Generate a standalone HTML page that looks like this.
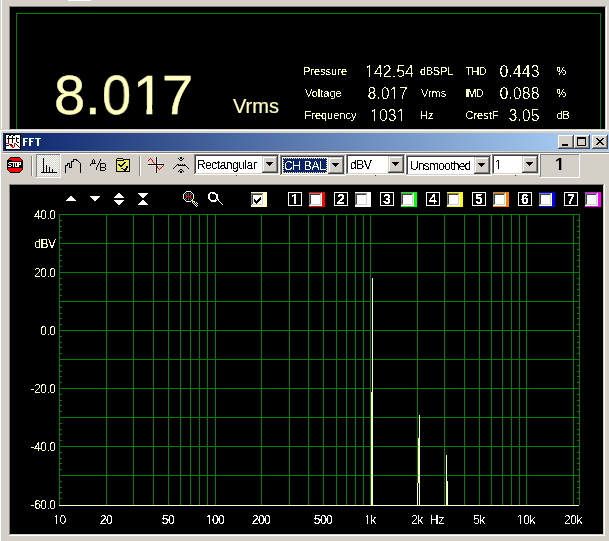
<!DOCTYPE html>
<html><head><meta charset="utf-8"><style>
html,body{margin:0;padding:0;width:609px;height:541px;overflow:hidden;background:#d4d0c8;}
svg{position:absolute;left:0;top:0;}
.t{position:absolute;white-space:nowrap;font-family:"Liberation Sans", sans-serif;line-height:1;will-change:transform;}
.px{filter:url(#crisp);will-change:auto;}
.px2{filter:url(#crisp2);will-change:auto;}
.px0{filter:url(#crisp0);will-change:auto;}
.one{display:inline-block;clip-path:polygon(0 0,100% 0,100% 0.68em,0.345em 0.68em,0.345em 100%,0.24em 100%,0.24em 0.68em,0 0.68em);}
.oneb{display:inline-block;clip-path:polygon(0 0,100% 0,100% 0.68em,0.375em 0.68em,0.375em 100%,0.225em 100%,0.225em 0.68em,0 0.68em);}
</style></head><body>
<svg width="609" height="541" viewBox="0 0 609 541" shape-rendering="crispEdges">
<defs><filter id="crisp" x="0" y="0" width="100%" height="100%"><feComponentTransfer><feFuncA type="discrete" tableValues="0 1"/></feComponentTransfer></filter><filter id="crisp0" x="0" y="0" width="100%" height="100%"><feComponentTransfer><feFuncA type="discrete" tableValues="0 1 1"/></feComponentTransfer></filter><filter id="crisp2" x="0" y="0" width="100%" height="100%"><feComponentTransfer><feFuncA type="discrete" tableValues="0 0 1"/></feComponentTransfer></filter></defs>
<rect x="0" y="0" width="609" height="541" fill="#d4d0c8"/>
<rect x="1" y="0" width="1" height="129" fill="#fff"/>
<rect x="68" y="0" width="23" height="1" fill="#fff"/>
<rect x="9" y="6" width="598" height="125" fill="#fff"/>
<rect x="9" y="6" width="597" height="124" fill="#808080"/>
<rect x="10" y="7" width="596" height="123" fill="#d4d0c8"/>
<rect x="10" y="7" width="595" height="122" fill="#000"/>
<rect x="11" y="8" width="594" height="121" fill="#000"/>
<rect x="16" y="13" width="585" height="1" fill="#008000"/>
<rect x="16" y="13" width="1" height="116" fill="#008000"/>
<rect x="600" y="13" width="1" height="116" fill="#008000"/>
<rect x="0" y="130" width="609" height="1" fill="#fff"/>
<rect x="0" y="130" width="1" height="411" fill="#fff"/>
<defs><linearGradient id="tg" gradientUnits="userSpaceOnUse" x1="3" x2="570" y1="0" y2="0"><stop offset="0" stop-color="#0a246a"/><stop offset="1" stop-color="#a6caf0"/></linearGradient></defs>
<rect x="3" y="133" width="606" height="18" fill="url(#tg)"/>
<rect x="5" y="134" width="16" height="16" fill="#000"/>
<rect x="6" y="135" width="14" height="14" fill="#fff"/>
<rect x="9" y="135" width="2" height="1" fill="#000"/>
<rect x="13" y="135" width="2" height="1" fill="#000"/>
<rect x="8" y="136" width="1" height="1" fill="#000"/>
<rect x="12" y="136" width="1" height="1" fill="#000"/>
<rect x="8" y="137" width="1" height="1" fill="#000"/>
<rect x="12" y="137" width="1" height="1" fill="#000"/>
<rect x="16" y="137" width="1" height="1" fill="#000"/>
<rect x="7" y="138" width="8" height="1" fill="#000"/>
<rect x="16" y="138" width="3" height="1" fill="#000"/>
<rect x="8" y="139" width="1" height="1" fill="#000"/>
<rect x="12" y="139" width="1" height="1" fill="#000"/>
<rect x="16" y="139" width="1" height="1" fill="#000"/>
<rect x="8" y="140" width="1" height="1" fill="#000"/>
<rect x="12" y="140" width="1" height="1" fill="#000"/>
<rect x="16" y="140" width="1" height="1" fill="#000"/>
<rect x="8" y="141" width="1" height="1" fill="#000"/>
<rect x="12" y="141" width="1" height="1" fill="#000"/>
<rect x="16" y="141" width="1" height="1" fill="#000"/>
<rect x="8" y="142" width="1" height="1" fill="#000"/>
<rect x="12" y="142" width="1" height="1" fill="#000"/>
<rect x="17" y="142" width="2" height="1" fill="#000"/>
<rect x="6" y="143" width="3" height="1" fill="#f00"/>
<rect x="14" y="143" width="2" height="1" fill="#f00"/>
<rect x="9" y="144" width="1" height="1" fill="#f00"/>
<rect x="10" y="144" width="2" height="1" fill="#000"/>
<rect x="14" y="144" width="1" height="1" fill="#f00"/>
<rect x="16" y="144" width="1" height="1" fill="#000"/>
<rect x="6" y="145" width="3" height="1" fill="#000"/>
<rect x="10" y="145" width="2" height="1" fill="#f00"/>
<rect x="12" y="145" width="1" height="1" fill="#000"/>
<rect x="14" y="145" width="1" height="1" fill="#f00"/>
<rect x="17" y="145" width="1" height="1" fill="#000"/>
<rect x="11" y="146" width="2" height="1" fill="#f00"/>
<rect x="14" y="146" width="1" height="1" fill="#f00"/>
<rect x="18" y="146" width="1" height="1" fill="#000"/>
<rect x="12" y="147" width="2" height="1" fill="#f00"/>
<rect x="19" y="147" width="1" height="1" fill="#f00"/>
<rect x="23" y="138" width="5" height="1" fill="#fff"/>
<rect x="29" y="138" width="5" height="1" fill="#fff"/>
<rect x="35" y="138" width="6" height="1" fill="#fff"/>
<rect x="23" y="139" width="2" height="1" fill="#fff"/>
<rect x="29" y="139" width="2" height="1" fill="#fff"/>
<rect x="37" y="139" width="2" height="1" fill="#fff"/>
<rect x="23" y="140" width="2" height="1" fill="#fff"/>
<rect x="29" y="140" width="2" height="1" fill="#fff"/>
<rect x="37" y="140" width="2" height="1" fill="#fff"/>
<rect x="23" y="141" width="4" height="1" fill="#fff"/>
<rect x="29" y="141" width="4" height="1" fill="#fff"/>
<rect x="37" y="141" width="2" height="1" fill="#fff"/>
<rect x="23" y="142" width="2" height="1" fill="#fff"/>
<rect x="29" y="142" width="2" height="1" fill="#fff"/>
<rect x="37" y="142" width="2" height="1" fill="#fff"/>
<rect x="23" y="143" width="2" height="1" fill="#fff"/>
<rect x="29" y="143" width="2" height="1" fill="#fff"/>
<rect x="37" y="143" width="2" height="1" fill="#fff"/>
<rect x="23" y="144" width="2" height="1" fill="#fff"/>
<rect x="29" y="144" width="2" height="1" fill="#fff"/>
<rect x="37" y="144" width="2" height="1" fill="#fff"/>
<rect x="23" y="145" width="2" height="1" fill="#fff"/>
<rect x="29" y="145" width="2" height="1" fill="#fff"/>
<rect x="37" y="145" width="2" height="1" fill="#fff"/>
<rect x="558" y="135" width="16" height="14" fill="#404040"/>
<rect x="558" y="135" width="15" height="13" fill="#fff"/>
<rect x="559" y="136" width="14" height="12" fill="#808080"/>
<rect x="559" y="136" width="13" height="11" fill="#d4d0c8"/>
<rect x="560" y="137" width="12" height="10" fill="#d4d0c8"/>
<rect x="574" y="135" width="16" height="14" fill="#404040"/>
<rect x="574" y="135" width="15" height="13" fill="#fff"/>
<rect x="575" y="136" width="14" height="12" fill="#808080"/>
<rect x="575" y="136" width="13" height="11" fill="#d4d0c8"/>
<rect x="576" y="137" width="12" height="10" fill="#d4d0c8"/>
<rect x="592" y="135" width="16" height="14" fill="#404040"/>
<rect x="592" y="135" width="15" height="13" fill="#fff"/>
<rect x="593" y="136" width="14" height="12" fill="#808080"/>
<rect x="593" y="136" width="13" height="11" fill="#d4d0c8"/>
<rect x="594" y="137" width="12" height="10" fill="#d4d0c8"/>
<rect x="562" y="144" width="6" height="2" fill="#000"/>
<rect x="577" y="137" width="9" height="2" fill="#000"/>
<rect x="577" y="137" width="1" height="9" fill="#000"/>
<rect x="585" y="137" width="1" height="9" fill="#000"/>
<rect x="577" y="145" width="9" height="1" fill="#000"/>
<rect x="596" y="138" width="2" height="1" fill="#000"/>
<rect x="602" y="138" width="2" height="1" fill="#000"/>
<rect x="597" y="139" width="2" height="1" fill="#000"/>
<rect x="601" y="139" width="2" height="1" fill="#000"/>
<rect x="598" y="140" width="4" height="1" fill="#000"/>
<rect x="599" y="141" width="2" height="1" fill="#000"/>
<rect x="598" y="142" width="4" height="1" fill="#000"/>
<rect x="597" y="143" width="2" height="1" fill="#000"/>
<rect x="601" y="143" width="2" height="1" fill="#000"/>
<rect x="596" y="144" width="2" height="1" fill="#000"/>
<rect x="602" y="144" width="2" height="1" fill="#000"/>
<rect x="3" y="152" width="606" height="1" fill="#808080"/>
<rect x="3" y="153" width="606" height="1" fill="#fff"/>
<rect x="10" y="157" width="10" height="1" fill="#000"/>
<rect x="9" y="158" width="1" height="1" fill="#000"/>
<rect x="10" y="158" width="10" height="1" fill="#f00"/>
<rect x="20" y="158" width="1" height="1" fill="#000"/>
<rect x="8" y="159" width="1" height="1" fill="#000"/>
<rect x="9" y="159" width="12" height="1" fill="#f00"/>
<rect x="21" y="159" width="1" height="1" fill="#000"/>
<rect x="7" y="160" width="5" height="1" fill="#000"/>
<rect x="12" y="160" width="10" height="1" fill="#f00"/>
<rect x="22" y="160" width="1" height="1" fill="#000"/>
<rect x="7" y="161" width="16" height="1" fill="#000"/>
<rect x="7" y="162" width="2" height="1" fill="#000"/>
<rect x="9" y="162" width="12" height="1" fill="#fff"/>
<rect x="21" y="162" width="2" height="1" fill="#000"/>
<rect x="7" y="163" width="1" height="1" fill="#000"/>
<rect x="8" y="163" width="1" height="1" fill="#fff"/>
<rect x="9" y="163" width="4" height="1" fill="#000"/>
<rect x="13" y="163" width="1" height="1" fill="#fff"/>
<rect x="14" y="163" width="1" height="1" fill="#000"/>
<rect x="15" y="163" width="1" height="1" fill="#fff"/>
<rect x="16" y="163" width="1" height="1" fill="#000"/>
<rect x="17" y="163" width="2" height="1" fill="#fff"/>
<rect x="19" y="163" width="1" height="1" fill="#000"/>
<rect x="20" y="163" width="1" height="1" fill="#fff"/>
<rect x="21" y="163" width="2" height="1" fill="#000"/>
<rect x="7" y="164" width="2" height="1" fill="#000"/>
<rect x="9" y="164" width="2" height="1" fill="#fff"/>
<rect x="11" y="164" width="2" height="1" fill="#000"/>
<rect x="13" y="164" width="1" height="1" fill="#fff"/>
<rect x="14" y="164" width="1" height="1" fill="#000"/>
<rect x="15" y="164" width="1" height="1" fill="#fff"/>
<rect x="16" y="164" width="1" height="1" fill="#000"/>
<rect x="17" y="164" width="4" height="1" fill="#fff"/>
<rect x="21" y="164" width="2" height="1" fill="#000"/>
<rect x="7" y="165" width="4" height="1" fill="#000"/>
<rect x="11" y="165" width="1" height="1" fill="#fff"/>
<rect x="12" y="165" width="1" height="1" fill="#000"/>
<rect x="13" y="165" width="1" height="1" fill="#fff"/>
<rect x="14" y="165" width="1" height="1" fill="#000"/>
<rect x="15" y="165" width="1" height="1" fill="#fff"/>
<rect x="16" y="165" width="1" height="1" fill="#000"/>
<rect x="17" y="165" width="2" height="1" fill="#fff"/>
<rect x="19" y="165" width="4" height="1" fill="#000"/>
<rect x="7" y="166" width="1" height="1" fill="#000"/>
<rect x="8" y="166" width="3" height="1" fill="#fff"/>
<rect x="11" y="166" width="2" height="1" fill="#000"/>
<rect x="13" y="166" width="1" height="1" fill="#fff"/>
<rect x="14" y="166" width="1" height="1" fill="#000"/>
<rect x="15" y="166" width="4" height="1" fill="#fff"/>
<rect x="19" y="166" width="4" height="1" fill="#000"/>
<rect x="7" y="167" width="16" height="1" fill="#000"/>
<rect x="7" y="168" width="1" height="1" fill="#000"/>
<rect x="8" y="168" width="14" height="1" fill="#f00"/>
<rect x="22" y="168" width="1" height="1" fill="#000"/>
<rect x="7" y="169" width="1" height="1" fill="#000"/>
<rect x="8" y="169" width="14" height="1" fill="#f00"/>
<rect x="22" y="169" width="1" height="1" fill="#000"/>
<rect x="8" y="170" width="1" height="1" fill="#000"/>
<rect x="9" y="170" width="12" height="1" fill="#f00"/>
<rect x="21" y="170" width="1" height="1" fill="#000"/>
<rect x="9" y="171" width="1" height="1" fill="#000"/>
<rect x="10" y="171" width="10" height="1" fill="#f00"/>
<rect x="20" y="171" width="1" height="1" fill="#000"/>
<rect x="10" y="172" width="10" height="1" fill="#000"/>
<rect x="31" y="156" width="1" height="20" fill="#808080"/>
<rect x="32" y="156" width="1" height="20" fill="#fff"/>
<rect x="36" y="154" width="25" height="24" fill="#fff"/>
<rect x="36" y="154" width="24" height="23" fill="#808080"/>
<defs><pattern id="dith" x="0" y="0" width="2" height="2" patternUnits="userSpaceOnUse"><rect x="0" y="0" width="2" height="2" fill="#d4d0c8"/><rect x="0" y="0" width="1" height="1" fill="#fff"/><rect x="1" y="1" width="1" height="1" fill="#fff"/></pattern></defs>
<rect x="37" y="155" width="23" height="22" fill="#d4d0c8"/>
<rect x="37" y="155" width="22" height="21" fill="url(#dith)"/>
<rect x="43" y="158" width="1" height="14" fill="#000"/>
<rect x="46" y="165" width="1" height="7" fill="#000"/>
<rect x="49" y="167" width="1" height="5" fill="#000"/>
<rect x="52" y="169" width="1" height="3" fill="#000"/>
<rect x="41" y="172" width="16" height="1" fill="#000"/>
<path d="M65.5,173 V165.5 H67.5 V163.5 H69.5 V167.5 H71.5 V161.5 H73.5 V159.5 H75.5 L77.5,160.5 L79.5,162.5 L80.5,163.5 V173" fill="none" stroke="#000" stroke-width="1"/>
<rect x="93" y="159" width="1" height="1" fill="#000"/>
<rect x="100" y="159" width="1" height="1" fill="#000"/>
<rect x="92" y="160" width="1" height="1" fill="#000"/>
<rect x="94" y="160" width="1" height="1" fill="#000"/>
<rect x="100" y="160" width="1" height="1" fill="#000"/>
<rect x="92" y="161" width="1" height="1" fill="#000"/>
<rect x="94" y="161" width="1" height="1" fill="#000"/>
<rect x="99" y="161" width="1" height="1" fill="#000"/>
<rect x="92" y="162" width="1" height="1" fill="#000"/>
<rect x="94" y="162" width="1" height="1" fill="#000"/>
<rect x="99" y="162" width="1" height="1" fill="#000"/>
<rect x="91" y="163" width="5" height="1" fill="#000"/>
<rect x="98" y="163" width="1" height="1" fill="#000"/>
<rect x="100" y="163" width="5" height="1" fill="#000"/>
<rect x="90" y="164" width="1" height="1" fill="#000"/>
<rect x="98" y="164" width="1" height="1" fill="#000"/>
<rect x="100" y="164" width="1" height="1" fill="#000"/>
<rect x="105" y="164" width="1" height="1" fill="#000"/>
<rect x="90" y="165" width="1" height="1" fill="#000"/>
<rect x="97" y="165" width="1" height="1" fill="#000"/>
<rect x="100" y="165" width="1" height="1" fill="#000"/>
<rect x="105" y="165" width="1" height="1" fill="#000"/>
<rect x="97" y="166" width="1" height="1" fill="#000"/>
<rect x="100" y="166" width="1" height="1" fill="#000"/>
<rect x="105" y="166" width="1" height="1" fill="#000"/>
<rect x="96" y="167" width="1" height="1" fill="#000"/>
<rect x="100" y="167" width="5" height="1" fill="#000"/>
<rect x="96" y="168" width="1" height="1" fill="#000"/>
<rect x="100" y="168" width="1" height="1" fill="#000"/>
<rect x="105" y="168" width="1" height="1" fill="#000"/>
<rect x="96" y="169" width="1" height="1" fill="#000"/>
<rect x="100" y="169" width="1" height="1" fill="#000"/>
<rect x="105" y="169" width="1" height="1" fill="#000"/>
<rect x="100" y="170" width="5" height="1" fill="#000"/>
<rect x="117" y="158" width="6" height="1" fill="#000"/>
<rect x="116" y="159" width="1" height="1" fill="#000"/>
<rect x="117" y="159" width="1" height="1" fill="#ffff00"/>
<rect x="118" y="159" width="1" height="1" fill="#d4d0c8"/>
<rect x="119" y="159" width="1" height="1" fill="#ffff00"/>
<rect x="120" y="159" width="1" height="1" fill="#d4d0c8"/>
<rect x="121" y="159" width="1" height="1" fill="#ffff00"/>
<rect x="122" y="159" width="1" height="1" fill="#d4d0c8"/>
<rect x="123" y="159" width="7" height="1" fill="#000"/>
<rect x="116" y="160" width="8" height="1" fill="#000"/>
<rect x="124" y="160" width="1" height="1" fill="#ffff00"/>
<rect x="125" y="160" width="1" height="1" fill="#d4d0c8"/>
<rect x="126" y="160" width="1" height="1" fill="#ffff00"/>
<rect x="127" y="160" width="1" height="1" fill="#d4d0c8"/>
<rect x="128" y="160" width="1" height="1" fill="#ffff00"/>
<rect x="129" y="160" width="1" height="1" fill="#000"/>
<rect x="116" y="161" width="1" height="1" fill="#000"/>
<rect x="117" y="161" width="1" height="1" fill="#ffff00"/>
<rect x="118" y="161" width="1" height="1" fill="#d4d0c8"/>
<rect x="119" y="161" width="1" height="1" fill="#ffff00"/>
<rect x="120" y="161" width="1" height="1" fill="#d4d0c8"/>
<rect x="121" y="161" width="1" height="1" fill="#ffff00"/>
<rect x="122" y="161" width="1" height="1" fill="#d4d0c8"/>
<rect x="123" y="161" width="1" height="1" fill="#ffff00"/>
<rect x="124" y="161" width="1" height="1" fill="#d4d0c8"/>
<rect x="125" y="161" width="1" height="1" fill="#ffff00"/>
<rect x="126" y="161" width="1" height="1" fill="#d4d0c8"/>
<rect x="127" y="161" width="1" height="1" fill="#ffff00"/>
<rect x="128" y="161" width="1" height="1" fill="#d4d0c8"/>
<rect x="129" y="161" width="1" height="1" fill="#000"/>
<rect x="116" y="162" width="1" height="1" fill="#000"/>
<rect x="117" y="162" width="1" height="1" fill="#d4d0c8"/>
<rect x="118" y="162" width="1" height="1" fill="#ffff00"/>
<rect x="119" y="162" width="1" height="1" fill="#d4d0c8"/>
<rect x="120" y="162" width="1" height="1" fill="#ffff00"/>
<rect x="121" y="162" width="1" height="1" fill="#d4d0c8"/>
<rect x="122" y="162" width="1" height="1" fill="#ffff00"/>
<rect x="123" y="162" width="1" height="1" fill="#d4d0c8"/>
<rect x="124" y="162" width="2" height="1" fill="#000"/>
<rect x="126" y="162" width="1" height="1" fill="#ffff00"/>
<rect x="127" y="162" width="1" height="1" fill="#d4d0c8"/>
<rect x="128" y="162" width="1" height="1" fill="#ffff00"/>
<rect x="129" y="162" width="1" height="1" fill="#000"/>
<rect x="116" y="163" width="1" height="1" fill="#000"/>
<rect x="117" y="163" width="1" height="1" fill="#ffff00"/>
<rect x="118" y="163" width="1" height="1" fill="#d4d0c8"/>
<rect x="119" y="163" width="1" height="1" fill="#ffff00"/>
<rect x="120" y="163" width="1" height="1" fill="#d4d0c8"/>
<rect x="121" y="163" width="1" height="1" fill="#ffff00"/>
<rect x="122" y="163" width="1" height="1" fill="#d4d0c8"/>
<rect x="123" y="163" width="2" height="1" fill="#000"/>
<rect x="125" y="163" width="1" height="1" fill="#ffff00"/>
<rect x="126" y="163" width="1" height="1" fill="#d4d0c8"/>
<rect x="127" y="163" width="1" height="1" fill="#ffff00"/>
<rect x="128" y="163" width="1" height="1" fill="#d4d0c8"/>
<rect x="129" y="163" width="1" height="1" fill="#000"/>
<rect x="116" y="164" width="1" height="1" fill="#000"/>
<rect x="117" y="164" width="1" height="1" fill="#d4d0c8"/>
<rect x="118" y="164" width="2" height="1" fill="#000"/>
<rect x="120" y="164" width="1" height="1" fill="#ffff00"/>
<rect x="121" y="164" width="1" height="1" fill="#d4d0c8"/>
<rect x="122" y="164" width="2" height="1" fill="#000"/>
<rect x="124" y="164" width="1" height="1" fill="#ffff00"/>
<rect x="125" y="164" width="1" height="1" fill="#d4d0c8"/>
<rect x="126" y="164" width="1" height="1" fill="#ffff00"/>
<rect x="127" y="164" width="1" height="1" fill="#d4d0c8"/>
<rect x="128" y="164" width="1" height="1" fill="#ffff00"/>
<rect x="129" y="164" width="1" height="1" fill="#000"/>
<rect x="116" y="165" width="1" height="1" fill="#000"/>
<rect x="117" y="165" width="1" height="1" fill="#ffff00"/>
<rect x="118" y="165" width="1" height="1" fill="#d4d0c8"/>
<rect x="119" y="165" width="4" height="1" fill="#000"/>
<rect x="123" y="165" width="1" height="1" fill="#ffff00"/>
<rect x="124" y="165" width="1" height="1" fill="#d4d0c8"/>
<rect x="125" y="165" width="1" height="1" fill="#ffff00"/>
<rect x="126" y="165" width="1" height="1" fill="#d4d0c8"/>
<rect x="127" y="165" width="1" height="1" fill="#ffff00"/>
<rect x="128" y="165" width="1" height="1" fill="#d4d0c8"/>
<rect x="129" y="165" width="1" height="1" fill="#000"/>
<rect x="116" y="166" width="1" height="1" fill="#000"/>
<rect x="117" y="166" width="1" height="1" fill="#d4d0c8"/>
<rect x="118" y="166" width="1" height="1" fill="#ffff00"/>
<rect x="119" y="166" width="1" height="1" fill="#d4d0c8"/>
<rect x="120" y="166" width="2" height="1" fill="#000"/>
<rect x="122" y="166" width="1" height="1" fill="#ffff00"/>
<rect x="123" y="166" width="1" height="1" fill="#d4d0c8"/>
<rect x="124" y="166" width="1" height="1" fill="#ffff00"/>
<rect x="125" y="166" width="1" height="1" fill="#d4d0c8"/>
<rect x="126" y="166" width="2" height="1" fill="#000"/>
<rect x="128" y="166" width="1" height="1" fill="#ffff00"/>
<rect x="129" y="166" width="1" height="1" fill="#000"/>
<rect x="116" y="167" width="1" height="1" fill="#000"/>
<rect x="117" y="167" width="1" height="1" fill="#ffff00"/>
<rect x="118" y="167" width="1" height="1" fill="#d4d0c8"/>
<rect x="119" y="167" width="1" height="1" fill="#ffff00"/>
<rect x="120" y="167" width="1" height="1" fill="#d4d0c8"/>
<rect x="121" y="167" width="1" height="1" fill="#ffff00"/>
<rect x="122" y="167" width="1" height="1" fill="#d4d0c8"/>
<rect x="123" y="167" width="1" height="1" fill="#ffff00"/>
<rect x="124" y="167" width="1" height="1" fill="#d4d0c8"/>
<rect x="125" y="167" width="1" height="1" fill="#ffff00"/>
<rect x="126" y="167" width="2" height="1" fill="#000"/>
<rect x="128" y="167" width="1" height="1" fill="#d4d0c8"/>
<rect x="129" y="167" width="1" height="1" fill="#000"/>
<rect x="116" y="168" width="1" height="1" fill="#000"/>
<rect x="117" y="168" width="1" height="1" fill="#d4d0c8"/>
<rect x="118" y="168" width="1" height="1" fill="#ffff00"/>
<rect x="119" y="168" width="1" height="1" fill="#d4d0c8"/>
<rect x="120" y="168" width="1" height="1" fill="#ffff00"/>
<rect x="121" y="168" width="2" height="1" fill="#000"/>
<rect x="123" y="168" width="1" height="1" fill="#d4d0c8"/>
<rect x="124" y="168" width="1" height="1" fill="#ffff00"/>
<rect x="125" y="168" width="2" height="1" fill="#000"/>
<rect x="127" y="168" width="1" height="1" fill="#d4d0c8"/>
<rect x="128" y="168" width="1" height="1" fill="#ffff00"/>
<rect x="129" y="168" width="1" height="1" fill="#000"/>
<rect x="116" y="169" width="1" height="1" fill="#000"/>
<rect x="117" y="169" width="1" height="1" fill="#ffff00"/>
<rect x="118" y="169" width="1" height="1" fill="#d4d0c8"/>
<rect x="119" y="169" width="1" height="1" fill="#ffff00"/>
<rect x="120" y="169" width="1" height="1" fill="#d4d0c8"/>
<rect x="121" y="169" width="1" height="1" fill="#ffff00"/>
<rect x="122" y="169" width="1" height="1" fill="#d4d0c8"/>
<rect x="123" y="169" width="4" height="1" fill="#000"/>
<rect x="127" y="169" width="1" height="1" fill="#ffff00"/>
<rect x="128" y="169" width="1" height="1" fill="#d4d0c8"/>
<rect x="129" y="169" width="1" height="1" fill="#000"/>
<rect x="116" y="170" width="1" height="1" fill="#000"/>
<rect x="117" y="170" width="1" height="1" fill="#d4d0c8"/>
<rect x="118" y="170" width="1" height="1" fill="#ffff00"/>
<rect x="119" y="170" width="1" height="1" fill="#d4d0c8"/>
<rect x="120" y="170" width="1" height="1" fill="#ffff00"/>
<rect x="121" y="170" width="1" height="1" fill="#d4d0c8"/>
<rect x="122" y="170" width="1" height="1" fill="#ffff00"/>
<rect x="123" y="170" width="1" height="1" fill="#d4d0c8"/>
<rect x="124" y="170" width="2" height="1" fill="#000"/>
<rect x="126" y="170" width="1" height="1" fill="#ffff00"/>
<rect x="127" y="170" width="1" height="1" fill="#d4d0c8"/>
<rect x="128" y="170" width="1" height="1" fill="#ffff00"/>
<rect x="129" y="170" width="1" height="1" fill="#000"/>
<rect x="116" y="171" width="14" height="1" fill="#000"/>
<rect x="139" y="156" width="1" height="20" fill="#808080"/>
<rect x="140" y="156" width="1" height="20" fill="#fff"/>
<rect x="148" y="163" width="1" height="1" fill="#fff"/>
<rect x="148" y="165" width="1" height="1" fill="#fff"/>
<rect x="150" y="163" width="1" height="1" fill="#fff"/>
<rect x="150" y="165" width="1" height="1" fill="#fff"/>
<rect x="152" y="163" width="1" height="1" fill="#fff"/>
<rect x="152" y="165" width="1" height="1" fill="#fff"/>
<rect x="154" y="163" width="1" height="1" fill="#fff"/>
<rect x="154" y="165" width="1" height="1" fill="#fff"/>
<rect x="156" y="163" width="1" height="1" fill="#fff"/>
<rect x="156" y="165" width="1" height="1" fill="#fff"/>
<rect x="158" y="163" width="1" height="1" fill="#fff"/>
<rect x="158" y="165" width="1" height="1" fill="#fff"/>
<rect x="160" y="163" width="1" height="1" fill="#fff"/>
<rect x="160" y="165" width="1" height="1" fill="#fff"/>
<rect x="162" y="163" width="1" height="1" fill="#fff"/>
<rect x="162" y="165" width="1" height="1" fill="#fff"/>
<rect x="155" y="157" width="1" height="1" fill="#fff"/>
<rect x="157" y="157" width="1" height="1" fill="#fff"/>
<rect x="155" y="159" width="1" height="1" fill="#fff"/>
<rect x="157" y="159" width="1" height="1" fill="#fff"/>
<rect x="155" y="161" width="1" height="1" fill="#fff"/>
<rect x="157" y="161" width="1" height="1" fill="#fff"/>
<rect x="155" y="163" width="1" height="1" fill="#fff"/>
<rect x="157" y="163" width="1" height="1" fill="#fff"/>
<rect x="155" y="165" width="1" height="1" fill="#fff"/>
<rect x="157" y="165" width="1" height="1" fill="#fff"/>
<rect x="155" y="167" width="1" height="1" fill="#fff"/>
<rect x="157" y="167" width="1" height="1" fill="#fff"/>
<rect x="155" y="169" width="1" height="1" fill="#fff"/>
<rect x="157" y="169" width="1" height="1" fill="#fff"/>
<rect x="155" y="171" width="1" height="1" fill="#fff"/>
<rect x="157" y="171" width="1" height="1" fill="#fff"/>
<rect x="148" y="160" width="1" height="1" fill="#f00"/>
<rect x="149" y="159" width="1" height="1" fill="#f00"/>
<rect x="150" y="158" width="1" height="1" fill="#f00"/>
<rect x="151" y="159" width="1" height="1" fill="#f00"/>
<rect x="152" y="160" width="1" height="1" fill="#f00"/>
<rect x="152" y="161" width="1" height="1" fill="#f00"/>
<rect x="153" y="162" width="1" height="1" fill="#f00"/>
<rect x="154" y="163" width="1" height="1" fill="#f00"/>
<rect x="155" y="164" width="1" height="1" fill="#f00"/>
<rect x="156" y="165" width="1" height="1" fill="#f00"/>
<rect x="157" y="166" width="1" height="1" fill="#f00"/>
<rect x="157" y="167" width="1" height="1" fill="#f00"/>
<rect x="158" y="168" width="1" height="1" fill="#f00"/>
<rect x="159" y="169" width="1" height="1" fill="#f00"/>
<rect x="160" y="168" width="1" height="1" fill="#f00"/>
<rect x="161" y="167" width="1" height="1" fill="#f00"/>
<rect x="162" y="166" width="1" height="1" fill="#f00"/>
<rect x="163" y="165" width="1" height="1" fill="#f00"/>
<rect x="156" y="157" width="1" height="16" fill="#000"/>
<rect x="148" y="164" width="16" height="1" fill="#000"/>
<rect x="180" y="157" width="2" height="1" fill="#000"/>
<rect x="178" y="158" width="1" height="1" fill="#000"/>
<rect x="180" y="158" width="2" height="1" fill="#000"/>
<rect x="183" y="158" width="1" height="1" fill="#000"/>
<rect x="179" y="159" width="1" height="1" fill="#000"/>
<rect x="182" y="159" width="1" height="1" fill="#000"/>
<rect x="180" y="160" width="2" height="1" fill="#000"/>
<rect x="177" y="164" width="2" height="1" fill="#000"/>
<rect x="180" y="164" width="1" height="1" fill="#000"/>
<rect x="182" y="164" width="1" height="1" fill="#000"/>
<rect x="184" y="164" width="1" height="1" fill="#000"/>
<rect x="176" y="165" width="1" height="1" fill="#000"/>
<rect x="178" y="165" width="8" height="1" fill="#000"/>
<rect x="175" y="166" width="1" height="1" fill="#000"/>
<rect x="186" y="166" width="1" height="1" fill="#000"/>
<rect x="174" y="167" width="1" height="1" fill="#000"/>
<rect x="187" y="167" width="1" height="1" fill="#000"/>
<rect x="173" y="168" width="1" height="1" fill="#000"/>
<rect x="188" y="168" width="1" height="1" fill="#000"/>
<rect x="180" y="169" width="2" height="1" fill="#000"/>
<rect x="179" y="170" width="1" height="1" fill="#000"/>
<rect x="182" y="170" width="1" height="1" fill="#000"/>
<rect x="178" y="171" width="1" height="1" fill="#000"/>
<rect x="180" y="171" width="2" height="1" fill="#000"/>
<rect x="183" y="171" width="1" height="1" fill="#000"/>
<rect x="180" y="172" width="2" height="1" fill="#000"/>
<rect x="194" y="154" width="86" height="21" fill="#fff"/>
<rect x="194" y="154" width="85" height="20" fill="#808080"/>
<rect x="195" y="155" width="84" height="19" fill="#d4d0c8"/>
<rect x="195" y="155" width="83" height="18" fill="#404040"/>
<rect x="196" y="156" width="82" height="17" fill="#fff"/>
<rect x="262" y="156" width="16" height="17" fill="#404040"/>
<rect x="262" y="156" width="15" height="16" fill="#d4d0c8"/>
<rect x="263" y="157" width="14" height="15" fill="#808080"/>
<rect x="263" y="157" width="13" height="14" fill="#fff"/>
<rect x="264" y="158" width="12" height="13" fill="#d4d0c8"/>
<rect x="266" y="162" width="7" height="1" fill="#000"/>
<rect x="267" y="163" width="5" height="1" fill="#000"/>
<rect x="268" y="164" width="3" height="1" fill="#000"/>
<rect x="269" y="165" width="1" height="1" fill="#000"/>
<rect x="280" y="155" width="66" height="21" fill="#fff"/>
<rect x="280" y="155" width="65" height="20" fill="#808080"/>
<rect x="281" y="156" width="64" height="19" fill="#d4d0c8"/>
<rect x="281" y="156" width="63" height="18" fill="#404040"/>
<rect x="282" y="157" width="62" height="17" fill="#fff"/>
<rect x="328" y="157" width="16" height="17" fill="#404040"/>
<rect x="328" y="157" width="15" height="16" fill="#d4d0c8"/>
<rect x="329" y="158" width="14" height="15" fill="#808080"/>
<rect x="329" y="158" width="13" height="14" fill="#fff"/>
<rect x="330" y="159" width="12" height="13" fill="#d4d0c8"/>
<rect x="332" y="163" width="7" height="1" fill="#000"/>
<rect x="333" y="164" width="5" height="1" fill="#000"/>
<rect x="334" y="165" width="3" height="1" fill="#000"/>
<rect x="335" y="166" width="1" height="1" fill="#000"/>
<rect x="346" y="154" width="60" height="21" fill="#fff"/>
<rect x="346" y="154" width="59" height="20" fill="#808080"/>
<rect x="347" y="155" width="58" height="19" fill="#d4d0c8"/>
<rect x="347" y="155" width="57" height="18" fill="#404040"/>
<rect x="348" y="156" width="56" height="17" fill="#fff"/>
<rect x="388" y="156" width="16" height="17" fill="#404040"/>
<rect x="388" y="156" width="15" height="16" fill="#d4d0c8"/>
<rect x="389" y="157" width="14" height="15" fill="#808080"/>
<rect x="389" y="157" width="13" height="14" fill="#fff"/>
<rect x="390" y="158" width="12" height="13" fill="#d4d0c8"/>
<rect x="392" y="162" width="7" height="1" fill="#000"/>
<rect x="393" y="163" width="5" height="1" fill="#000"/>
<rect x="394" y="164" width="3" height="1" fill="#000"/>
<rect x="395" y="165" width="1" height="1" fill="#000"/>
<rect x="406" y="155" width="86" height="21" fill="#fff"/>
<rect x="406" y="155" width="85" height="20" fill="#808080"/>
<rect x="407" y="156" width="84" height="19" fill="#d4d0c8"/>
<rect x="407" y="156" width="83" height="18" fill="#404040"/>
<rect x="408" y="157" width="82" height="17" fill="#fff"/>
<rect x="474" y="157" width="16" height="17" fill="#404040"/>
<rect x="474" y="157" width="15" height="16" fill="#d4d0c8"/>
<rect x="475" y="158" width="14" height="15" fill="#808080"/>
<rect x="475" y="158" width="13" height="14" fill="#fff"/>
<rect x="476" y="159" width="12" height="13" fill="#d4d0c8"/>
<rect x="478" y="163" width="7" height="1" fill="#000"/>
<rect x="479" y="164" width="5" height="1" fill="#000"/>
<rect x="480" y="165" width="3" height="1" fill="#000"/>
<rect x="481" y="166" width="1" height="1" fill="#000"/>
<rect x="492" y="154" width="48" height="21" fill="#fff"/>
<rect x="492" y="154" width="47" height="20" fill="#808080"/>
<rect x="493" y="155" width="46" height="19" fill="#d4d0c8"/>
<rect x="493" y="155" width="45" height="18" fill="#404040"/>
<rect x="494" y="156" width="44" height="17" fill="#fff"/>
<rect x="522" y="156" width="16" height="17" fill="#404040"/>
<rect x="522" y="156" width="15" height="16" fill="#d4d0c8"/>
<rect x="523" y="157" width="14" height="15" fill="#808080"/>
<rect x="523" y="157" width="13" height="14" fill="#fff"/>
<rect x="524" y="158" width="12" height="13" fill="#d4d0c8"/>
<rect x="526" y="162" width="7" height="1" fill="#000"/>
<rect x="527" y="163" width="5" height="1" fill="#000"/>
<rect x="528" y="164" width="3" height="1" fill="#000"/>
<rect x="529" y="165" width="1" height="1" fill="#000"/>
<rect x="236" y="175" width="1" height="1" fill="#404040"/>
<rect x="375" y="175" width="1" height="1" fill="#404040"/>
<rect x="515" y="175" width="1" height="1" fill="#404040"/>
<rect x="283" y="158" width="44" height="15" fill="#0a246a"/>
<rect x="283.5" y="158.5" width="43" height="14" fill="none" stroke="#f5db95" stroke-width="1" stroke-dasharray="1 1"/>
<rect x="540" y="154" width="40" height="24" fill="#fff"/>
<rect x="540" y="154" width="39" height="23" fill="#808080"/>
<rect x="541" y="155" width="38" height="22" fill="#d4d0c8"/>
<rect x="9" y="184" width="596" height="352" fill="#fff"/>
<rect x="9" y="184" width="595" height="351" fill="#808080"/>
<rect x="10" y="185" width="594" height="350" fill="#d4d0c8"/>
<rect x="10" y="185" width="593" height="349" fill="#000"/>
<rect x="11" y="186" width="592" height="348" fill="#000"/>
<rect x="70" y="196" width="2" height="1" fill="#fff"/>
<rect x="69" y="197" width="4" height="1" fill="#fff"/>
<rect x="68" y="198" width="6" height="1" fill="#fff"/>
<rect x="67" y="199" width="8" height="1" fill="#fff"/>
<rect x="66" y="200" width="10" height="1" fill="#fff"/>
<rect x="90" y="196" width="10" height="1" fill="#fff"/>
<rect x="91" y="197" width="8" height="1" fill="#fff"/>
<rect x="92" y="198" width="6" height="1" fill="#fff"/>
<rect x="93" y="199" width="4" height="1" fill="#fff"/>
<rect x="94" y="200" width="2" height="1" fill="#fff"/>
<rect x="118" y="193" width="2" height="1" fill="#fff"/>
<rect x="117" y="194" width="4" height="1" fill="#fff"/>
<rect x="116" y="195" width="6" height="1" fill="#fff"/>
<rect x="115" y="196" width="8" height="1" fill="#fff"/>
<rect x="114" y="197" width="10" height="1" fill="#fff"/>
<rect x="114" y="200" width="10" height="1" fill="#fff"/>
<rect x="115" y="201" width="8" height="1" fill="#fff"/>
<rect x="116" y="202" width="6" height="1" fill="#fff"/>
<rect x="117" y="203" width="4" height="1" fill="#fff"/>
<rect x="118" y="204" width="2" height="1" fill="#fff"/>
<rect x="138" y="193" width="10" height="1" fill="#fff"/>
<rect x="139" y="194" width="8" height="1" fill="#fff"/>
<rect x="140" y="195" width="6" height="1" fill="#fff"/>
<rect x="141" y="196" width="4" height="1" fill="#fff"/>
<rect x="142" y="197" width="2" height="1" fill="#fff"/>
<rect x="142" y="200" width="2" height="1" fill="#fff"/>
<rect x="141" y="201" width="4" height="1" fill="#fff"/>
<rect x="140" y="202" width="6" height="1" fill="#fff"/>
<rect x="139" y="203" width="8" height="1" fill="#fff"/>
<rect x="138" y="204" width="10" height="1" fill="#fff"/>
<rect x="186" y="191" width="5" height="1" fill="#fff"/>
<rect x="185" y="192" width="1" height="1" fill="#fff"/>
<rect x="191" y="192" width="1" height="1" fill="#fff"/>
<rect x="184" y="193" width="1" height="1" fill="#fff"/>
<rect x="186" y="193" width="1" height="1" fill="#608080"/>
<rect x="188" y="193" width="1" height="1" fill="#608080"/>
<rect x="190" y="193" width="1" height="1" fill="#608080"/>
<rect x="192" y="193" width="1" height="1" fill="#fff"/>
<rect x="183" y="194" width="1" height="1" fill="#fff"/>
<rect x="185" y="194" width="1" height="1" fill="#608080"/>
<rect x="188" y="194" width="1" height="1" fill="#f00"/>
<rect x="191" y="194" width="1" height="1" fill="#608080"/>
<rect x="193" y="194" width="1" height="1" fill="#fff"/>
<rect x="183" y="195" width="1" height="1" fill="#fff"/>
<rect x="186" y="195" width="1" height="1" fill="#608080"/>
<rect x="188" y="195" width="1" height="1" fill="#f00"/>
<rect x="190" y="195" width="1" height="1" fill="#608080"/>
<rect x="193" y="195" width="1" height="1" fill="#fff"/>
<rect x="183" y="196" width="1" height="1" fill="#fff"/>
<rect x="186" y="196" width="5" height="1" fill="#f00"/>
<rect x="193" y="196" width="1" height="1" fill="#fff"/>
<rect x="183" y="197" width="1" height="1" fill="#fff"/>
<rect x="186" y="197" width="1" height="1" fill="#608080"/>
<rect x="188" y="197" width="1" height="1" fill="#f00"/>
<rect x="190" y="197" width="1" height="1" fill="#608080"/>
<rect x="193" y="197" width="1" height="1" fill="#fff"/>
<rect x="183" y="198" width="1" height="1" fill="#fff"/>
<rect x="185" y="198" width="1" height="1" fill="#608080"/>
<rect x="188" y="198" width="1" height="1" fill="#f00"/>
<rect x="191" y="198" width="1" height="1" fill="#608080"/>
<rect x="193" y="198" width="1" height="1" fill="#fff"/>
<rect x="184" y="199" width="1" height="1" fill="#fff"/>
<rect x="186" y="199" width="1" height="1" fill="#608080"/>
<rect x="188" y="199" width="1" height="1" fill="#608080"/>
<rect x="190" y="199" width="1" height="1" fill="#608080"/>
<rect x="192" y="199" width="1" height="1" fill="#fff"/>
<rect x="185" y="200" width="1" height="1" fill="#fff"/>
<rect x="191" y="200" width="1" height="1" fill="#fff"/>
<rect x="192" y="200" width="1" height="1" fill="#ff0"/>
<rect x="186" y="201" width="5" height="1" fill="#fff"/>
<rect x="192" y="201" width="2" height="1" fill="#ff0"/>
<rect x="194" y="201" width="1" height="1" fill="#fff"/>
<rect x="192" y="202" width="1" height="1" fill="#fff"/>
<rect x="194" y="202" width="1" height="1" fill="#fff"/>
<rect x="196" y="202" width="1" height="1" fill="#fff"/>
<rect x="193" y="203" width="1" height="1" fill="#fff"/>
<rect x="195" y="203" width="1" height="1" fill="#fff"/>
<rect x="197" y="203" width="1" height="1" fill="#fff"/>
<rect x="194" y="204" width="1" height="1" fill="#fff"/>
<rect x="196" y="204" width="1" height="1" fill="#fff"/>
<rect x="195" y="205" width="1" height="1" fill="#fff"/>
<rect x="197" y="205" width="1" height="1" fill="#fff"/>
<rect x="196" y="206" width="1" height="1" fill="#fff"/>
<rect x="210" y="192" width="5" height="1" fill="#fff"/>
<rect x="209" y="193" width="2" height="1" fill="#fff"/>
<rect x="212" y="193" width="4" height="1" fill="#fff"/>
<rect x="208" y="194" width="2" height="1" fill="#fff"/>
<rect x="215" y="194" width="3" height="1" fill="#fff"/>
<rect x="208" y="195" width="2" height="1" fill="#fff"/>
<rect x="216" y="195" width="2" height="1" fill="#fff"/>
<rect x="208" y="196" width="2" height="1" fill="#fff"/>
<rect x="216" y="196" width="2" height="1" fill="#fff"/>
<rect x="208" y="197" width="2" height="1" fill="#fff"/>
<rect x="216" y="197" width="2" height="1" fill="#fff"/>
<rect x="208" y="198" width="2" height="1" fill="#fff"/>
<rect x="216" y="198" width="2" height="1" fill="#fff"/>
<rect x="209" y="199" width="2" height="1" fill="#fff"/>
<rect x="215" y="199" width="1" height="1" fill="#fff"/>
<rect x="217" y="199" width="2" height="1" fill="#fff"/>
<rect x="210" y="200" width="7" height="1" fill="#fff"/>
<rect x="218" y="200" width="1" height="1" fill="#fff"/>
<rect x="211" y="201" width="5" height="1" fill="#fff"/>
<rect x="219" y="201" width="1" height="1" fill="#fff"/>
<rect x="220" y="202" width="1" height="1" fill="#fff"/>
<rect x="221" y="203" width="1" height="1" fill="#fff"/>
<rect x="222" y="204" width="1" height="1" fill="#fff"/>
<rect x="251" y="192" width="16" height="15" fill="#ffffc0"/>
<rect x="251" y="193" width="13" height="13" fill="#fff"/>
<rect x="251" y="193" width="12" height="12" fill="#808080"/>
<rect x="252" y="194" width="11" height="11" fill="#d4d0c8"/>
<rect x="252" y="194" width="10" height="10" fill="#404040"/>
<rect x="253" y="195" width="9" height="9" fill="#fff"/>
<rect x="260" y="197" width="1" height="1" fill="#000"/>
<rect x="259" y="198" width="2" height="1" fill="#000"/>
<rect x="254" y="199" width="1" height="1" fill="#000"/>
<rect x="258" y="199" width="3" height="1" fill="#000"/>
<rect x="254" y="200" width="2" height="1" fill="#000"/>
<rect x="257" y="200" width="3" height="1" fill="#000"/>
<rect x="254" y="201" width="5" height="1" fill="#000"/>
<rect x="255" y="202" width="3" height="1" fill="#000"/>
<rect x="256" y="203" width="1" height="1" fill="#000"/>
<rect x="288" y="192" width="14" height="14" fill="#fff"/>
<rect x="289" y="193" width="12" height="12" fill="#000"/>
<rect x="309" y="192" width="16" height="15" fill="#ff0000"/>
<rect x="309" y="193" width="13" height="13" fill="#fff"/>
<rect x="309" y="193" width="12" height="12" fill="#808080"/>
<rect x="310" y="194" width="11" height="11" fill="#d4d0c8"/>
<rect x="310" y="194" width="10" height="10" fill="#404040"/>
<rect x="311" y="195" width="9" height="9" fill="#fff"/>
<rect x="334" y="192" width="14" height="14" fill="#fff"/>
<rect x="335" y="193" width="12" height="12" fill="#000"/>
<rect x="355" y="192" width="16" height="15" fill="#ffffff"/>
<rect x="355" y="193" width="13" height="13" fill="#fff"/>
<rect x="355" y="193" width="12" height="12" fill="#808080"/>
<rect x="356" y="194" width="11" height="11" fill="#d4d0c8"/>
<rect x="356" y="194" width="10" height="10" fill="#404040"/>
<rect x="357" y="195" width="9" height="9" fill="#fff"/>
<rect x="380" y="192" width="14" height="14" fill="#fff"/>
<rect x="381" y="193" width="12" height="12" fill="#000"/>
<rect x="401" y="192" width="16" height="15" fill="#00ff00"/>
<rect x="401" y="193" width="13" height="13" fill="#fff"/>
<rect x="401" y="193" width="12" height="12" fill="#808080"/>
<rect x="402" y="194" width="11" height="11" fill="#d4d0c8"/>
<rect x="402" y="194" width="10" height="10" fill="#404040"/>
<rect x="403" y="195" width="9" height="9" fill="#fff"/>
<rect x="426" y="192" width="14" height="14" fill="#fff"/>
<rect x="427" y="193" width="12" height="12" fill="#000"/>
<rect x="447" y="192" width="16" height="15" fill="#ffff00"/>
<rect x="447" y="193" width="13" height="13" fill="#fff"/>
<rect x="447" y="193" width="12" height="12" fill="#808080"/>
<rect x="448" y="194" width="11" height="11" fill="#d4d0c8"/>
<rect x="448" y="194" width="10" height="10" fill="#404040"/>
<rect x="449" y="195" width="9" height="9" fill="#fff"/>
<rect x="472" y="192" width="14" height="14" fill="#fff"/>
<rect x="473" y="193" width="12" height="12" fill="#000"/>
<rect x="493" y="192" width="16" height="15" fill="#ff8000"/>
<rect x="493" y="193" width="13" height="13" fill="#fff"/>
<rect x="493" y="193" width="12" height="12" fill="#808080"/>
<rect x="494" y="194" width="11" height="11" fill="#d4d0c8"/>
<rect x="494" y="194" width="10" height="10" fill="#404040"/>
<rect x="495" y="195" width="9" height="9" fill="#fff"/>
<rect x="518" y="192" width="14" height="14" fill="#fff"/>
<rect x="519" y="193" width="12" height="12" fill="#000"/>
<rect x="539" y="192" width="16" height="15" fill="#0000ff"/>
<rect x="539" y="193" width="13" height="13" fill="#fff"/>
<rect x="539" y="193" width="12" height="12" fill="#808080"/>
<rect x="540" y="194" width="11" height="11" fill="#d4d0c8"/>
<rect x="540" y="194" width="10" height="10" fill="#404040"/>
<rect x="541" y="195" width="9" height="9" fill="#fff"/>
<rect x="564" y="192" width="14" height="14" fill="#fff"/>
<rect x="565" y="193" width="12" height="12" fill="#000"/>
<rect x="585" y="192" width="16" height="15" fill="#ff00ff"/>
<rect x="585" y="193" width="13" height="13" fill="#fff"/>
<rect x="585" y="193" width="12" height="12" fill="#808080"/>
<rect x="586" y="194" width="11" height="11" fill="#d4d0c8"/>
<rect x="586" y="194" width="10" height="10" fill="#404040"/>
<rect x="587" y="195" width="9" height="9" fill="#fff"/>
<rect x="59" y="214" width="1" height="291" fill="#008000"/>
<rect x="106" y="214" width="1" height="291" fill="#008000"/>
<rect x="133" y="214" width="1" height="291" fill="#008000"/>
<rect x="153" y="214" width="1" height="291" fill="#008000"/>
<rect x="168" y="214" width="1" height="291" fill="#008000"/>
<rect x="180" y="214" width="1" height="291" fill="#008000"/>
<rect x="190" y="214" width="1" height="291" fill="#008000"/>
<rect x="199" y="214" width="1" height="291" fill="#008000"/>
<rect x="207" y="214" width="1" height="291" fill="#008000"/>
<rect x="215" y="214" width="1" height="291" fill="#008000"/>
<rect x="261" y="214" width="1" height="291" fill="#008000"/>
<rect x="289" y="214" width="1" height="291" fill="#008000"/>
<rect x="308" y="214" width="1" height="291" fill="#008000"/>
<rect x="323" y="214" width="1" height="291" fill="#008000"/>
<rect x="336" y="214" width="1" height="291" fill="#008000"/>
<rect x="346" y="214" width="1" height="291" fill="#008000"/>
<rect x="355" y="214" width="1" height="291" fill="#008000"/>
<rect x="363" y="214" width="1" height="291" fill="#008000"/>
<rect x="370" y="214" width="1" height="291" fill="#008000"/>
<rect x="417" y="214" width="1" height="291" fill="#008000"/>
<rect x="444" y="214" width="1" height="291" fill="#008000"/>
<rect x="464" y="214" width="1" height="291" fill="#008000"/>
<rect x="479" y="214" width="1" height="291" fill="#008000"/>
<rect x="491" y="214" width="1" height="291" fill="#008000"/>
<rect x="502" y="214" width="1" height="291" fill="#008000"/>
<rect x="511" y="214" width="1" height="291" fill="#008000"/>
<rect x="519" y="214" width="1" height="291" fill="#008000"/>
<rect x="526" y="214" width="1" height="291" fill="#008000"/>
<rect x="573" y="214" width="1" height="291" fill="#008000"/>
<rect x="579" y="214" width="1" height="291" fill="#008000"/>
<rect x="59" y="214" width="521" height="1" fill="#008000"/>
<rect x="59" y="243" width="521" height="1" fill="#008000"/>
<rect x="59" y="272" width="521" height="1" fill="#008000"/>
<rect x="59" y="301" width="521" height="1" fill="#008000"/>
<rect x="59" y="330" width="521" height="1" fill="#008000"/>
<rect x="59" y="359" width="521" height="1" fill="#008000"/>
<rect x="59" y="388" width="521" height="1" fill="#008000"/>
<rect x="59" y="417" width="521" height="1" fill="#008000"/>
<rect x="59" y="446" width="521" height="1" fill="#008000"/>
<rect x="59" y="475" width="521" height="1" fill="#008000"/>
<rect x="59" y="505" width="520" height="1" fill="#008000"/>
<rect x="60" y="220" width="2" height="1" fill="#008000"/>
<rect x="577" y="220" width="2" height="1" fill="#008000"/>
<rect x="60" y="226" width="2" height="1" fill="#008000"/>
<rect x="577" y="226" width="2" height="1" fill="#008000"/>
<rect x="60" y="231" width="2" height="1" fill="#008000"/>
<rect x="577" y="231" width="2" height="1" fill="#008000"/>
<rect x="60" y="237" width="2" height="1" fill="#008000"/>
<rect x="577" y="237" width="2" height="1" fill="#008000"/>
<rect x="60" y="249" width="2" height="1" fill="#008000"/>
<rect x="577" y="249" width="2" height="1" fill="#008000"/>
<rect x="60" y="255" width="2" height="1" fill="#008000"/>
<rect x="577" y="255" width="2" height="1" fill="#008000"/>
<rect x="60" y="260" width="2" height="1" fill="#008000"/>
<rect x="577" y="260" width="2" height="1" fill="#008000"/>
<rect x="60" y="266" width="2" height="1" fill="#008000"/>
<rect x="577" y="266" width="2" height="1" fill="#008000"/>
<rect x="60" y="278" width="2" height="1" fill="#008000"/>
<rect x="577" y="278" width="2" height="1" fill="#008000"/>
<rect x="60" y="284" width="2" height="1" fill="#008000"/>
<rect x="577" y="284" width="2" height="1" fill="#008000"/>
<rect x="60" y="289" width="2" height="1" fill="#008000"/>
<rect x="577" y="289" width="2" height="1" fill="#008000"/>
<rect x="60" y="295" width="2" height="1" fill="#008000"/>
<rect x="577" y="295" width="2" height="1" fill="#008000"/>
<rect x="60" y="307" width="2" height="1" fill="#008000"/>
<rect x="577" y="307" width="2" height="1" fill="#008000"/>
<rect x="60" y="313" width="2" height="1" fill="#008000"/>
<rect x="577" y="313" width="2" height="1" fill="#008000"/>
<rect x="60" y="318" width="2" height="1" fill="#008000"/>
<rect x="577" y="318" width="2" height="1" fill="#008000"/>
<rect x="60" y="324" width="2" height="1" fill="#008000"/>
<rect x="577" y="324" width="2" height="1" fill="#008000"/>
<rect x="60" y="336" width="2" height="1" fill="#008000"/>
<rect x="577" y="336" width="2" height="1" fill="#008000"/>
<rect x="60" y="342" width="2" height="1" fill="#008000"/>
<rect x="577" y="342" width="2" height="1" fill="#008000"/>
<rect x="60" y="347" width="2" height="1" fill="#008000"/>
<rect x="577" y="347" width="2" height="1" fill="#008000"/>
<rect x="60" y="353" width="2" height="1" fill="#008000"/>
<rect x="577" y="353" width="2" height="1" fill="#008000"/>
<rect x="60" y="365" width="2" height="1" fill="#008000"/>
<rect x="577" y="365" width="2" height="1" fill="#008000"/>
<rect x="60" y="371" width="2" height="1" fill="#008000"/>
<rect x="577" y="371" width="2" height="1" fill="#008000"/>
<rect x="60" y="376" width="2" height="1" fill="#008000"/>
<rect x="577" y="376" width="2" height="1" fill="#008000"/>
<rect x="60" y="382" width="2" height="1" fill="#008000"/>
<rect x="577" y="382" width="2" height="1" fill="#008000"/>
<rect x="60" y="394" width="2" height="1" fill="#008000"/>
<rect x="577" y="394" width="2" height="1" fill="#008000"/>
<rect x="60" y="400" width="2" height="1" fill="#008000"/>
<rect x="577" y="400" width="2" height="1" fill="#008000"/>
<rect x="60" y="405" width="2" height="1" fill="#008000"/>
<rect x="577" y="405" width="2" height="1" fill="#008000"/>
<rect x="60" y="411" width="2" height="1" fill="#008000"/>
<rect x="577" y="411" width="2" height="1" fill="#008000"/>
<rect x="60" y="423" width="2" height="1" fill="#008000"/>
<rect x="577" y="423" width="2" height="1" fill="#008000"/>
<rect x="60" y="429" width="2" height="1" fill="#008000"/>
<rect x="577" y="429" width="2" height="1" fill="#008000"/>
<rect x="60" y="434" width="2" height="1" fill="#008000"/>
<rect x="577" y="434" width="2" height="1" fill="#008000"/>
<rect x="60" y="440" width="2" height="1" fill="#008000"/>
<rect x="577" y="440" width="2" height="1" fill="#008000"/>
<rect x="60" y="452" width="2" height="1" fill="#008000"/>
<rect x="577" y="452" width="2" height="1" fill="#008000"/>
<rect x="60" y="458" width="2" height="1" fill="#008000"/>
<rect x="577" y="458" width="2" height="1" fill="#008000"/>
<rect x="60" y="463" width="2" height="1" fill="#008000"/>
<rect x="577" y="463" width="2" height="1" fill="#008000"/>
<rect x="60" y="469" width="2" height="1" fill="#008000"/>
<rect x="577" y="469" width="2" height="1" fill="#008000"/>
<rect x="60" y="481" width="2" height="1" fill="#008000"/>
<rect x="577" y="481" width="2" height="1" fill="#008000"/>
<rect x="60" y="487" width="2" height="1" fill="#008000"/>
<rect x="577" y="487" width="2" height="1" fill="#008000"/>
<rect x="60" y="492" width="2" height="1" fill="#008000"/>
<rect x="577" y="492" width="2" height="1" fill="#008000"/>
<rect x="60" y="498" width="2" height="1" fill="#008000"/>
<rect x="577" y="498" width="2" height="1" fill="#008000"/>
<rect x="59" y="505" width="520" height="1" fill="#ffffc0"/>
<rect x="371" y="392" width="1" height="113" fill="#ffffc0"/>
<rect x="372" y="278" width="1" height="227" fill="#ffffc0"/>
<rect x="417" y="483" width="1" height="22" fill="#ffffc0"/>
<rect x="418" y="438" width="1" height="45" fill="#ffffc0"/>
<rect x="419" y="415" width="1" height="90" fill="#ffffc0"/>
<rect x="446" y="455" width="1" height="50" fill="#ffffc0"/>
<rect x="447" y="481" width="1" height="24" fill="#ffffc0"/>
</svg>
<div class="t " style="left:54.1px;top:67px;font-size:56px;color:#ffffc0;font-weight:normal;-webkit-text-stroke:0.4px #ffffc0;">8</div>
<div class="t " style="left:84.5px;top:67px;font-size:56px;color:#ffffc0;font-weight:normal;-webkit-text-stroke:0.4px #ffffc0;">.</div>
<div class="t " style="left:101.0px;top:67px;font-size:56px;color:#ffffc0;font-weight:normal;-webkit-text-stroke:0.4px #ffffc0;transform:scaleX(0.93);transform-origin:15.4px 0;">0</div>
<div class="t " style="left:133.2px;top:67px;font-size:56px;color:#ffffc0;font-weight:normal;-webkit-text-stroke:0.4px #ffffc0;"><span class="one">1</span></div>
<div class="t " style="left:162.3px;top:67px;font-size:56px;color:#ffffc0;font-weight:normal;-webkit-text-stroke:0.4px #ffffc0;">7</div>
<div class="t " style="left:233.3px;top:96.2px;font-size:20px;color:#ffffc0;font-weight:normal;-webkit-text-stroke:0.2px #ffffc0;">Vrms</div>
<div class="t px" style="left:303px;top:66px;font-size:11px;color:#ffffc0;font-weight:normal;">Pressure</div>
<div class="t px2" style="left:365px;top:64px;font-size:16px;color:#ffffc0;font-weight:normal;"><span class="one">1</span>42.54</div>
<div class="t px" style="left:420px;top:66px;font-size:11px;color:#ffffc0;font-weight:normal;letter-spacing:-0.3px;">dBSPL</div>
<div class="t px" style="left:465.5px;top:66px;font-size:11px;color:#ffffc0;font-weight:normal;letter-spacing:-0.7px;">THD</div>
<div class="t px2" style="left:499.5px;top:64px;font-size:16px;color:#ffffc0;font-weight:normal;">0.443</div>
<div class="t px" style="left:556.5px;top:66px;font-size:11px;color:#ffffc0;font-weight:normal;">%</div>
<div class="t px" style="left:305px;top:88px;font-size:11px;color:#ffffc0;font-weight:normal;">Voltage</div>
<div class="t px2" style="left:367.5px;top:86px;font-size:16px;color:#ffffc0;font-weight:normal;">8.0<span class="one">1</span>7</div>
<div class="t px" style="left:421px;top:88px;font-size:11px;color:#ffffc0;font-weight:normal;">Vrms</div>
<div class="t px" style="left:465.5px;top:88px;font-size:11px;color:#ffffc0;font-weight:normal;letter-spacing:-1px;">IMD</div>
<div class="t px2" style="left:499.5px;top:86px;font-size:16px;color:#ffffc0;font-weight:normal;">0.088</div>
<div class="t px" style="left:556.5px;top:88px;font-size:11px;color:#ffffc0;font-weight:normal;">%</div>
<div class="t px" style="left:304.5px;top:110px;font-size:11px;color:#ffffc0;font-weight:normal;">Frequency</div>
<div class="t px2" style="left:370px;top:108px;font-size:16px;color:#ffffc0;font-weight:normal;"><span class="one">1</span>03<span class="one">1</span></div>
<div class="t px" style="left:420px;top:110px;font-size:11px;color:#ffffc0;font-weight:normal;">Hz</div>
<div class="t px" style="left:465.5px;top:110px;font-size:11px;color:#ffffc0;font-weight:normal;">CrestF</div>
<div class="t px2" style="left:508.5px;top:108px;font-size:16px;color:#ffffc0;font-weight:normal;">3.05</div>
<div class="t px" style="left:556.5px;top:110px;font-size:11px;color:#ffffc0;font-weight:normal;">dB</div>
<div class="t px" style="left:197px;top:159px;font-size:12px;color:#000;font-weight:normal;letter-spacing:-0.5px;">Rectangular</div>
<div class="t px" style="left:284px;top:160px;font-size:12px;color:#fff;font-weight:normal;letter-spacing:-0.3px;">CH BAL</div>
<div class="t px" style="left:350px;top:159px;font-size:12px;color:#000;font-weight:normal;letter-spacing:-0.5px;">dBV</div>
<div class="t px" style="left:410px;top:160px;font-size:12px;color:#000;font-weight:normal;letter-spacing:-0.75px;">Unsmoothed</div>
<div class="t px" style="left:495px;top:159px;font-size:12px;color:#000;font-weight:normal;letter-spacing:-0.5px;"><span class="one">1</span></div>
<div class="t " style="left:555px;top:156px;font-size:17px;color:#000;font-weight:bold;"><span class="oneb">1</span></div>
<div class="t px" style="right:553.5px;top:209px;font-size:12px;color:#ffffc0;font-weight:normal;letter-spacing:-0.5px;">40.0</div>
<div class="t px" style="right:553.5px;top:238px;font-size:12px;color:#ffffc0;font-weight:normal;letter-spacing:-0.5px;">dBV</div>
<div class="t px" style="right:553.5px;top:267px;font-size:12px;color:#ffffc0;font-weight:normal;letter-spacing:-0.5px;">20.0</div>
<div class="t px" style="right:553.5px;top:325px;font-size:12px;color:#ffffc0;font-weight:normal;letter-spacing:-0.5px;">0.0</div>
<div class="t px" style="right:553.5px;top:383px;font-size:12px;color:#ffffc0;font-weight:normal;letter-spacing:-0.5px;">-20.0</div>
<div class="t px" style="right:553.5px;top:441px;font-size:12px;color:#ffffc0;font-weight:normal;letter-spacing:-0.5px;">-40.0</div>
<div class="t px" style="right:553.5px;top:499px;font-size:12px;color:#ffffc0;font-weight:normal;letter-spacing:-0.5px;">-60.0</div>
<div class="t px" style="left:9.5px;width:100px;text-align:center;top:514px;font-size:12px;color:#fff;font-weight:normal;letter-spacing:-0.5px;"><span class="one">1</span>0</div>
<div class="t px" style="left:56px;width:100px;text-align:center;top:514px;font-size:12px;color:#fff;font-weight:normal;letter-spacing:-0.5px;">20</div>
<div class="t px" style="left:118px;width:100px;text-align:center;top:514px;font-size:12px;color:#fff;font-weight:normal;letter-spacing:-0.5px;">50</div>
<div class="t px" style="left:165px;width:100px;text-align:center;top:514px;font-size:12px;color:#fff;font-weight:normal;letter-spacing:-0.5px;"><span class="one">1</span>00</div>
<div class="t px" style="left:211px;width:100px;text-align:center;top:514px;font-size:12px;color:#fff;font-weight:normal;letter-spacing:-0.5px;">200</div>
<div class="t px" style="left:273px;width:100px;text-align:center;top:514px;font-size:12px;color:#fff;font-weight:normal;letter-spacing:-0.5px;">500</div>
<div class="t px" style="left:320px;width:100px;text-align:center;top:514px;font-size:12px;color:#fff;font-weight:normal;letter-spacing:-0.5px;"><span class="one">1</span>k</div>
<div class="t px" style="left:367px;width:100px;text-align:center;top:514px;font-size:12px;color:#fff;font-weight:normal;letter-spacing:-0.5px;">2k</div>
<div class="t px" style="left:429px;width:100px;text-align:center;top:514px;font-size:12px;color:#fff;font-weight:normal;letter-spacing:-0.5px;">5k</div>
<div class="t px" style="left:476px;width:100px;text-align:center;top:514px;font-size:12px;color:#fff;font-weight:normal;letter-spacing:-0.5px;"><span class="one">1</span>0k</div>
<div class="t px" style="left:523px;width:100px;text-align:center;top:514px;font-size:12px;color:#fff;font-weight:normal;letter-spacing:-0.5px;">20k</div>
<div class="t px" style="left:430px;top:514px;font-size:12px;color:#fff;font-weight:normal;letter-spacing:-0.5px;">Hz</div>
<div class="t px" style="left:291px;top:192px;font-size:14px;color:#fff;font-weight:bold;"><span class="oneb">1</span></div>
<div class="t px" style="left:337px;top:192px;font-size:14px;color:#fff;font-weight:bold;">2</div>
<div class="t px" style="left:383px;top:192px;font-size:14px;color:#fff;font-weight:bold;">3</div>
<div class="t px" style="left:429px;top:192px;font-size:14px;color:#fff;font-weight:bold;">4</div>
<div class="t px" style="left:475px;top:192px;font-size:14px;color:#fff;font-weight:bold;">5</div>
<div class="t px" style="left:521px;top:192px;font-size:14px;color:#fff;font-weight:bold;">6</div>
<div class="t px" style="left:567px;top:192px;font-size:14px;color:#fff;font-weight:bold;">7</div>
</body></html>
